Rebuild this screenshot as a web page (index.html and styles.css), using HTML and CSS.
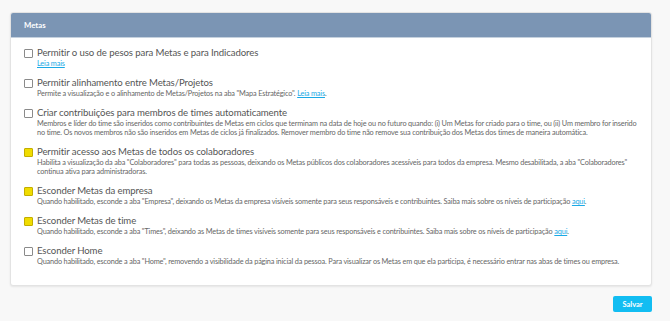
FILE: index.html
```html
<!DOCTYPE html>
<html lang="pt-BR">
<head>
    <meta charset="UTF-8">
    <title>Metas</title>
    <link rel="stylesheet" href="styles.css">
</head>
<body>
    <div class="page">
        <div class="card">
            <div class="card-header">Metas</div>
            <div class="card-body">
                <div class="option">
                    <span class="check"></span>
                    <div class="option-text">
                        <div class="option-title">Permitir o uso de pesos para Metas e para Indicadores</div>
                        <div class="option-desc"><a href="#">Leia mais</a></div>
                    </div>
                </div>
                <div class="option">
                    <span class="check"></span>
                    <div class="option-text">
                        <div class="option-title">Permitir alinhamento entre Metas/Projetos</div>
                        <div class="option-desc">Permite a visualização e o alinhamento de Metas/Projetos na aba "Mapa Estratégico". <a href="#">Leia mais</a>.</div>
                    </div>
                </div>
                <div class="option">
                    <span class="check"></span>
                    <div class="option-text">
                        <div class="option-title">Criar contribuições para membros de times automaticamente</div>
                        <div class="option-desc">Membros e líder do time são inseridos como contribuintes de Metas em ciclos que terminam na data de hoje ou no futuro quando: (i) Um Metas for criado para o time, ou (ii) Um membro for inserido<br>no time. Os novos membros não são inseridos em Metas de ciclos já finalizados. Remover membro do time não remove sua contribuição dos Metas dos times de maneira automática.</div>
                    </div>
                </div>
                <div class="option">
                    <span class="check checked"></span>
                    <div class="option-text">
                        <div class="option-title">Permitir acesso aos Metas de todos os colaboradores</div>
                        <div class="option-desc">Habilita a visualização da aba "Colaboradores" para todas as pessoas, deixando os Metas públicos dos colaboradores acessíveis para todos da empresa. Mesmo desabilitada, a aba "Colaboradores"<br>continua ativa para administradoras.</div>
                    </div>
                </div>
                <div class="option">
                    <span class="check checked"></span>
                    <div class="option-text">
                        <div class="option-title">Esconder Metas da empresa</div>
                        <div class="option-desc">Quando habilitado, esconde a aba "Empresa", deixando os Metas da empresa visíveis somente para seus responsáveis e contribuintes. Saiba mais sobre os níveis de participação <a href="#">aqui</a>.</div>
                    </div>
                </div>
                <div class="option">
                    <span class="check checked"></span>
                    <div class="option-text">
                        <div class="option-title">Esconder Metas de time</div>
                        <div class="option-desc">Quando habilitado, esconde a aba "Times", deixando as Metas de times visíveis somente para seus responsáveis e contribuintes. Saiba mais sobre os níveis de participação <a href="#">aqui</a>.</div>
                    </div>
                </div>
                <div class="option">
                    <span class="check"></span>
                    <div class="option-text">
                        <div class="option-title">Esconder Home</div>
                        <div class="option-desc">Quando habilitado, esconde a aba "Home", removendo a visibilidade da página inicial da pessoa. Para visualizar os Metas em que ela participa, é necessário entrar nas abas de times ou empresa.</div>
                    </div>
                </div>
            </div>
        </div>
        <div class="actions">
            <button class="btn-save">Salvar</button>
        </div>
    </div>
</body>
</html>
```

FILE: styles.css
```css
* {
    margin: 0;
    padding: 0;
    box-sizing: border-box;
    font-family: 'Lato', 'Open Sans', sans-serif;
}

body {
    background-color: #f8f8f8;
    padding: 12px 18px 0 10px;
}

.card {
    background-color: white;
    border: 1px solid #e3e3e3;
    border-radius: 3px;
    box-shadow: 0 1px 2px rgba(0, 0, 0, 0.08);
    overflow: hidden;
}

.card-header {
    background-color: #7b95b4;
    border-bottom: 1px solid #c5d1de;
    color: white;
    font-weight: bold;
    font-size: 7.8px;
    height: 25px;
    line-height: 24px;
    padding-left: 13px;
}

.card-body {
    padding: 9px 13px 19px 13px;
}

.option {
    display: flex;
    gap: 4px;
    margin-bottom: 9px;
}

.option:last-child {
    margin-bottom: 0;
}

.check {
    flex: 0 0 9px;
    width: 9px;
    height: 9px;
    margin-top: 2px;
    border: 1px solid #8a8a8a;
    border-radius: 1px;
    background: white;
}

.check.checked {
    background: #f0dc00;
    border-color: #c2ad00;
}

.option-title {
    color: #555;
    font-size: 9.6px;
    letter-spacing: -0.1px;
    line-height: 12px;
}

.option-desc {
    color: #666;
    font-size: 7.3px;
    letter-spacing: -0.15px;
    line-height: 9px;
    white-space: nowrap;
}

.option-desc a {
    color: #1aa9e6;
}

.actions {
    display: flex;
    justify-content: flex-end;
    margin-top: 10px;
}

.btn-save {
    background-color: #12bdf2;
    color: white;
    border: none;
    border-radius: 2px;
    font-weight: bold;
    font-size: 7.5px;
    width: 39px;
    height: 16px;
}
```
